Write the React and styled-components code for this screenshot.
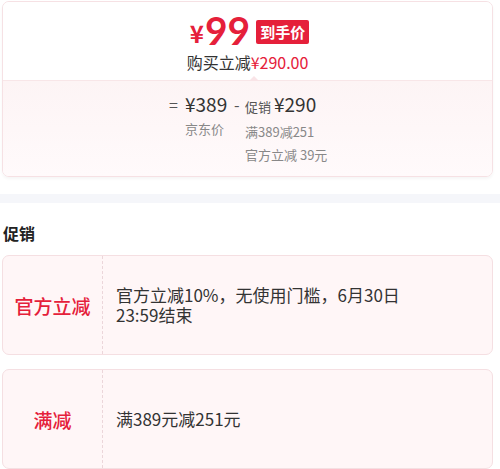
import React from "react";
import styled, { createGlobalStyle } from "styled-components";

const Global = createGlobalStyle`
  html, body { margin: 0; padding: 0; background: #fff; }
  body { font-family: "Noto Sans CJK SC", "Noto Sans", sans-serif; color: #333; }
`;

const RED = "#e5203a";

const Page = styled.div`
  width: 500px;
  padding-top: 1px;
`;

const Inset = styled.div`
  padding: 0 7px 0 2px;
`;

const PriceCard = styled.div`
  border: 1px solid #f6e1e4;
  border-radius: 7px;
  overflow: hidden;
  box-shadow: 0 2px 3px rgba(0, 0, 0, 0.04);
`;

const TopPart = styled.div`
  height: 78px;
  display: flex;
  flex-direction: column;
  align-items: center;
  background: #fff;
  border-bottom: 1px solid #f8e6e8;
  position: relative;
`;

const Notch = styled.span`
  position: absolute;
  left: 246px;
  bottom: -1px;
  width: 0;
  height: 0;
  border-left: 5px solid transparent;
  border-right: 5px solid transparent;
  border-bottom: 5px solid #f9e4e7;
`;

const FinalRow = styled.div`
  display: flex;
  align-items: center;
  margin-top: 10px;
  height: 36px;
  margin-left: 4px;
`;

const Yen = styled.span`
  color: ${RED};
  font-size: 24px;
  font-weight: 700;
  line-height: 1;
  margin-top: 6px;
`;

const BigNum = styled.span`
  color: ${RED};
  font-size: 39px;
  font-weight: 700;
  line-height: 1;
  margin-left: 1px;
  font-family: "Lato", "Noto Sans", sans-serif;
`;

const Badge = styled.span`
  margin-left: 6px;
  margin-top: 3px;
  background: ${RED};
  color: #fff;
  font-size: 15px;
  font-weight: 700;
  line-height: 24px;
  padding: 0 4px;
  border-radius: 2px;
`;

const Saving = styled.div`
  font-size: 16px;
  line-height: 20px;
  margin-top: 4px;
  color: #333;
`;

const Red = styled.span`
  color: ${RED};
`;

const BottomPart = styled.div`
  height: 95px;
  background: linear-gradient(#fdf4f5, #fffafb);
  display: flex;
  padding: 10px 0 0 166px;
  box-sizing: border-box;
`;

const Formula = styled.div`
  display: flex;
  align-items: flex-start;
`;

const Op = styled.span`
  width: ${(p) => p.$w}px;
  text-align: ${(p) => (p.$center ? "center" : "left")};
  font-size: 16px;
  color: #555;
  line-height: 26px;
`;

const Column = styled.div`
  display: flex;
  flex-direction: column;
  min-width: ${(p) => p.$min || 0}px;
`;

const Amount = styled.div`
  font-size: 19px;
  line-height: 26px;
  color: #333;
  white-space: nowrap;
`;

const SmallLabel = styled.span`
  font-size: 13px;
  color: #555;
  margin-right: 3px;
`;

const Note = styled.div`
  font-size: 13px;
  line-height: 23px;
  color: #888;
  white-space: nowrap;
`;

const Band = styled.div`
  height: 9px;
  background: #f5f6fa;
  margin-top: 17px;
`;

const Heading = styled.div`
  font-size: 16px;
  font-weight: 700;
  color: #222;
  line-height: 20px;
  padding: 20px 0 0 1px;
  margin-bottom: 12px;
`;

const PromoList = styled.div`
  display: flex;
  flex-direction: column;
  gap: 14px;
`;

const PromoCard = styled.div`
  display: flex;
  height: 100px;
  box-sizing: border-box;
  background: #fff6f7;
  border: 1px solid #f5dfe2;
  border-radius: 7px;
`;

const PromoLabel = styled.div`
  width: 99px;
  flex-shrink: 0;
  display: flex;
  align-items: center;
  justify-content: center;
  color: ${RED};
  font-size: 19px;
  font-weight: 500;
  border-right: 1px dashed #ecd6da;
`;

const PromoText = styled.div`
  display: flex;
  align-items: center;
  padding-left: 13px;
  width: 305px;
  font-size: 17px;
  line-height: 20px;
  color: #333;
`;

export default function App() {
  return (
    <Page>
      <Global />
      <Inset>
        <PriceCard>
          <TopPart>
            <FinalRow>
              <Yen>¥</Yen>
              <BigNum>99</BigNum>
              <Badge>到手价</Badge>
            </FinalRow>
            <Saving>
              购买立减<Red>¥290.00</Red>
            </Saving>
            <Notch />
          </TopPart>
          <BottomPart>
            <Formula>
              <Op $w={16}>=</Op>
              <Column $min={49}>
                <Amount>¥389</Amount>
                <Note>京东价</Note>
              </Column>
              <Op $w={11}>-</Op>
              <Column>
                <Amount>
                  <SmallLabel>促销</SmallLabel>¥290
                </Amount>
                <Note>满389减251</Note>
                <Note>官方立减 39元</Note>
              </Column>
            </Formula>
          </BottomPart>
        </PriceCard>
      </Inset>
      <Band />
      <Inset>
        <Heading>促销</Heading>
        <PromoList>
          <PromoCard>
            <PromoLabel>官方立减</PromoLabel>
            <PromoText>官方立减10%，无使用门槛，6月30日 23:59结束</PromoText>
          </PromoCard>
          <PromoCard>
            <PromoLabel>满减</PromoLabel>
            <PromoText>满389元减251元</PromoText>
          </PromoCard>
        </PromoList>
      </Inset>
    </Page>
  );
}
